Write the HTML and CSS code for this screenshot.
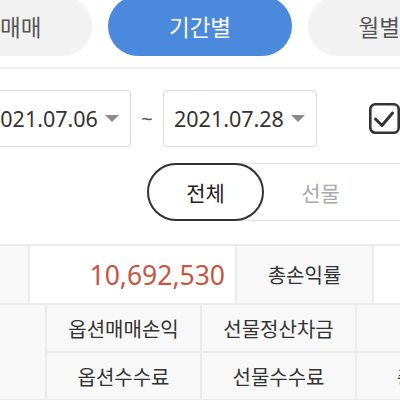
FILE: index.html
```html
<!DOCTYPE html>
<html lang="ko">
<head>
<meta charset="utf-8">
<link rel="stylesheet" href="styles.css">
</head>
<body>
<div class="page">
  <nav class="tabs">
    <div class="tab">당일매매</div>
    <div class="tab active">기간별</div>
    <div class="tab">월별매매</div>
  </nav>
  <div class="divider"></div>
  <div class="dates">
    <div class="date-box"><span>2021.07.06</span><span class="caret"></span></div>
    <span class="tilde">~</span>
    <div class="date-box"><span>2021.07.28</span><span class="caret"></span></div>
    <div class="check">
      <svg width="31" height="31" viewBox="0 0 31 31">
        <rect x="1.3" y="1.3" width="28.4" height="28.4" rx="5" fill="none" stroke="#333" stroke-width="2.6"/>
        <polyline points="6.5,16 13,22.5 23.5,10" fill="none" stroke="#333" stroke-width="3" stroke-linecap="round" stroke-linejoin="round"/>
      </svg>
    </div>
  </div>
  <div class="segment-row">
    <div class="segment">
      <div class="seg active">전체</div>
      <div class="seg">선물</div>
      <div class="seg">옵션</div>
    </div>
  </div>
  <table class="summary">
    <colgroup>
      <col class="c-label"><col class="c-value"><col class="c-label"><col class="c-value">
    </colgroup>
    <tr>
      <td class="label">총손익</td>
      <td class="value loss">10,692,530</td>
      <td class="label">총손익률</td>
      <td class="value"></td>
    </tr>
  </table>
  <table class="detail">
    <colgroup>
      <col class="c-d"><col class="c-d"><col class="c-d"><col class="c-d">
    </colgroup>
    <tr>
      <td class="label" rowspan="2">구분</td>
      <td class="label">옵션매매손익</td>
      <td class="label">선물정산차금</td>
      <td class="label">제세금</td>
    </tr>
    <tr>
      <td class="label">옵션수수료</td>
      <td class="label">선물수수료</td>
      <td class="label">총수수료</td>
    </tr>
  </table>
</div>
</body>
</html>
```
FILE: styles.css
```css
html, body {
  margin: 0;
  padding: 0;
  background: #fff;
}
body {
  width: 400px;
  height: 400px;
  overflow: hidden;
  font-family: "Noto Sans", "Noto Sans CJK KR", sans-serif;
  color: #333;
}
.page {
  width: 400px;
}
.tabs {
  display: flex;
  gap: 16px;
  margin-left: -92px;
  margin-top: -4px;
}
.tab {
  flex: 0 0 184px;
  height: 60px;
  border-radius: 30px;
  background: #f2f2f2;
  color: #555;
  font-size: 22.5px;
  display: flex;
  align-items: center;
  justify-content: center;
}
.tab.active {
  background: #4a89dc;
  color: #fff;
}
.divider {
  height: 2px;
  background: #efefef;
  margin-top: 11px;
}
.dates {
  display: flex;
  align-items: center;
  margin-left: -23px;
  padding-top: 21px;
}
.date-box {
  flex: 0 0 auto;
  box-sizing: border-box;
  width: 154px;
  height: 57px;
  border: 1px solid #dadada;
  border-radius: 4px;
  padding: 0 11px 0 10px;
  display: flex;
  align-items: center;
  justify-content: space-between;
  font-size: 21.5px;
  color: #333;
}
.caret {
  width: 0;
  height: 0;
  border-left: 7px solid transparent;
  border-right: 7px solid transparent;
  border-top: 7px solid #8c8c8c;
}
.tilde {
  width: 33px;
  text-align: center;
  font-size: 20px;
  color: #555;
}
.check {
  margin-left: 52px;
  width: 31px;
  height: 31px;
  display: flex;
}
.segment-row {
  padding-top: 16px;
  padding-left: 147px;
}
.segment {
  display: flex;
  width: 345px;
  height: 58px;
  box-sizing: border-box;
  border: 1px solid #e3e3e3;
  border-radius: 29px;
}
.seg {
  flex: 0 0 115px;
  display: flex;
  align-items: center;
  justify-content: center;
  font-size: 21px;
  color: #aaa;
  box-sizing: border-box;
}
.seg.active {
  margin: -1px;
  height: 58px;
  flex-basis: 117px;
  border: 2px solid #333;
  border-radius: 29px;
  color: #222;
}
table {
  border-collapse: collapse;
  table-layout: fixed;
}
td {
  border: 2px solid #ebebeb;
  padding: 0;
  font-size: 20px;
  text-align: center;
  color: #333;
  white-space: nowrap;
  overflow: visible;
}
td.label {
  background: #f8f8f8;
}
td.value {
  background: #fff;
  text-align: right;
  padding-right: 10px;
}
.summary {
  margin-top: 23px;
  margin-left: -109px;
  width: 688px;
}
.c-label {
  width: 137px;
}
.c-value {
  width: 207px;
}
.summary td {
  height: 57px;
}
.loss {
  color: #c8553f !important;
  font-size: 26.5px !important;
}
.detail {
  margin-top: -2px;
  margin-left: -110px;
  width: 620px;
}
.c-d {
  width: 155px;
}
.detail td {
  height: 46px;
}
```
